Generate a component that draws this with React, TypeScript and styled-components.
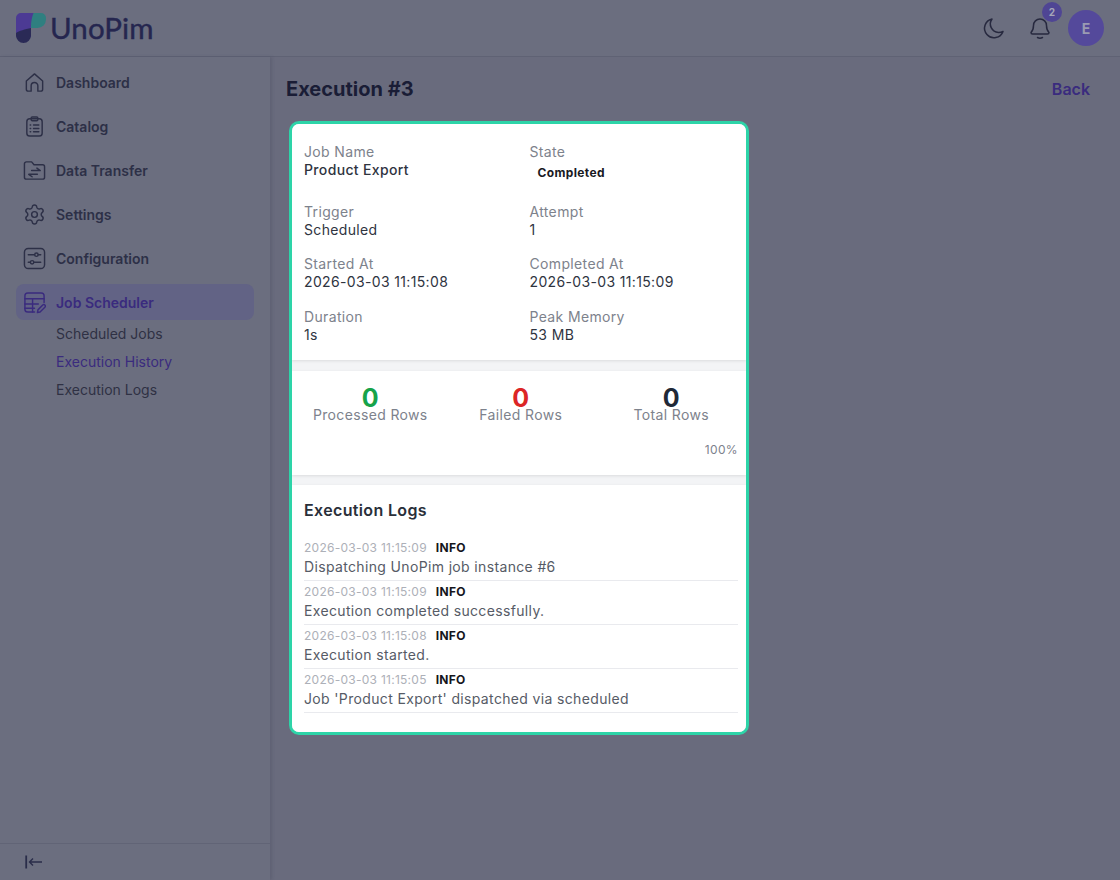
import React from "react";
import styled, { createGlobalStyle } from "styled-components";
import { Settings } from "lucide-react";

const GlobalStyle = createGlobalStyle`
  html, body { margin: 0; padding: 0; height: 100%; }
  body { background: #696b7d; font-family: Inter, "Liberation Sans", sans-serif; overflow: hidden; }
  * { box-sizing: border-box; }
`;

const Page = styled.div`
  width: 1120px;
  height: 880px;
  display: flex;
  flex-direction: column;
  background: #696b7d;
`;

const Header = styled.header`
  height: 57px;
  flex: none;
  display: flex;
  align-items: center;
  justify-content: space-between;
  padding: 0 16px;
  background: #6b6e7f;
  border-bottom: 1px solid #5f6274;
`;

const Brand = styled.div`
  display: flex;
  align-items: center;
  gap: 4px;
  margin-top: -1px;
`;

const Wordmark = styled.span`
  font-family: Lato, sans-serif;
  font-size: 29.5px;
  font-weight: 400;
  line-height: 30px;
  letter-spacing: 0.1px;
  color: #25264f;
  -webkit-text-stroke: 0.4px #25264f;
`;

const HeaderTools = styled.div`
  display: flex;
  align-items: center;
`;

const ToolButton = styled.div`
  position: relative;
  width: 24px;
  height: 24px;
  color: #27293f;
  margin-right: 22px;
`;

const Badge = styled.span`
  position: absolute;
  top: -14px;
  left: 14px;
  width: 20px;
  height: 20px;
  border-radius: 50%;
  background: #4f4594;
  color: #a5a6b8;
  font-size: 10px;
  font-weight: 700;
  display: flex;
  align-items: center;
  justify-content: center;
`;

const Avatar = styled.div`
  width: 36px;
  height: 36px;
  border-radius: 50%;
  background: #54499b;
  color: #9a9ab2;
  font-size: 14px;
  font-weight: 700;
  display: flex;
  align-items: center;
  justify-content: center;
  margin-left: -6px;
`;

const Body = styled.div`
  flex: 1;
  min-height: 0;
  display: flex;
`;

const Sidebar = styled.aside`
  width: 270px;
  flex: none;
  display: flex;
  flex-direction: column;
  justify-content: space-between;
  background: #6b6e7f;
  box-shadow: 2px 0 3px rgba(60, 62, 85, 0.22);
`;

const Nav = styled.nav`
  display: flex;
  flex-direction: column;
  gap: 8px;
  padding: 7px 16px 0;
`;

const NavItem = styled.div<{ $active?: boolean }>`
  height: 36px;
  display: flex;
  align-items: center;
  gap: 10px;
  padding-left: 7px;
  border-radius: 8px;
  font-size: 14px;
  font-weight: 600;
  color: ${(p) => (p.$active ? "#3a2b7e" : "#2d3047")};
  background: ${(p) => (p.$active ? "#626385" : "transparent")};

  svg {
    width: 23px;
    height: 23px;
    flex: none;
  }
`;

const SubNav = styled.div`
  display: flex;
  flex-direction: column;
  gap: 8px;
  padding: 0 0 0 40px;
  margin-top: -4px;
`;

const SubItem = styled.div<{ $active?: boolean }>`
  height: 20px;
  line-height: 20px;
  font-size: 14px;
  color: ${(p) => (p.$active ? "#3a2b7e" : "#2f3144")};
`;

const SidebarFoot = styled.div`
  height: 37px;
  display: flex;
  align-items: center;
  padding-left: 25px;
  border-top: 1px solid #616476;
  color: #2a2d4a;
`;

const Main = styled.main`
  flex: 1;
  padding: 20px 30px 0 16px;
`;

const TitleRow = styled.div`
  display: flex;
  align-items: center;
  justify-content: space-between;
  height: 24px;
`;

const Title = styled.h1`
  margin: 0;
  font-size: 20px;
  font-weight: 700;
  line-height: 24px;
  color: #1a1d36;
`;

const BackLink = styled.a`
  font-size: 16px;
  font-weight: 600;
  color: #3a2b7e;
`;

const Card = styled.section`
  width: 460px;
  height: 614px;
  margin: 20px 0 0 3px;
  display: flex;
  flex-direction: column;
  border: 3px solid #2dd4a8;
  border-radius: 10px;
  background: #f3f4f6;
  overflow: hidden;
  letter-spacing: 0.35px;
`;

const Panel = styled.div`
  background: #fff;
  box-shadow: 0 1px 3px rgba(0, 0, 0, 0.1);
`;

const DetailPanel = styled(Panel)`
  height: 236px;
  padding: 19px 12px 0;
  display: grid;
  grid-template-columns: 225.5px 1fr;
  grid-template-rows: 60px 52px 53px 40px;
`;

const Field = styled.div`
  display: flex;
  flex-direction: column;
`;

const FieldLabel = styled.span`
  font-size: 14px;
  line-height: 18px;
  color: #7d828c;
`;

const FieldValue = styled.span<{ $strong?: boolean }>`
  font-size: 14px;
  line-height: 18px;
  font-weight: ${(p) => (p.$strong ? 500 : 400)};
  color: #2f343f;
`;

const StateBadge = styled.span`
  font-size: 12px;
  font-weight: 700;
  line-height: 18px;
  margin: 3px 0 0 8px;
  color: #1a1a1f;
`;

const StatsPanel = styled(Panel)`
  height: 104px;
  margin-top: 11px;
  padding: 17px 8px 0 3px;
`;

const StatsRow = styled.div`
  display: grid;
  grid-template-columns: repeat(3, 150.5px);
`;

const Stat = styled.div`
  display: flex;
  flex-direction: column;
  align-items: center;
`;

const StatValue = styled.span<{ $color: string }>`
  font-size: 25px;
  font-weight: 700;
  line-height: 20px;
  color: ${(p) => p.$color};
`;

const StatLabel = styled.span`
  font-size: 14px;
  line-height: 14px;
  color: #7d828c;
`;

const Percent = styled.div`
  margin-top: 20px;
  text-align: right;
  font-size: 12px;
  line-height: 16px;
  color: #7d828c;
`;

const LogsPanel = styled(Panel)`
  flex: 1;
  margin-top: 10px;
  padding: 15px 8px 0 12px;
`;

const LogsTitle = styled.h2`
  margin: 0 0 17px;
  font-size: 16px;
  font-weight: 600;
  line-height: 20px;
  color: #2a2f3a;
`;

const LogRow = styled.div`
  height: 44px;
  padding-top: 3px;
  border-bottom: 1px solid #e9eaee;
`;

const LogMeta = styled.div`
  display: flex;
  gap: 9px;
  font-size: 12px;
  line-height: 16px;
  letter-spacing: 0.26px;
  color: #adb0b8;
`;

const LogLevel = styled.span`
  font-weight: 700;
  color: #15151c;
`;

const LogMessage = styled.div`
  font-size: 14px;
  line-height: 22px;
  color: #565b66;
`;

const LogoMark = () => (
  <svg width="30" height="30" viewBox="0 0 30 30">
    <path d="M15 0h10a5 5 0 0 1 5 5v1.500a8.500 8.500 0 0 1-8.500 8.500H15z" fill="#2f7f80" />
    <path d="M0 5a5 5 0 0 1 5-5h12.500C16 4 15 8 15 15v9H0z" fill="#4c3a94" />
    <path d="M0 20C3 17.500 9 16.500 15 15v7.500a7.500 7.500 0 0 1-15 0z" fill="#2a2a56" />
  </svg>
);

const stroke = {
  fill: "none",
  stroke: "currentColor",
  strokeWidth: 1.5,
  strokeLinecap: "round" as const,
  strokeLinejoin: "round" as const,
};

const HomeIcon = () => (
  <svg viewBox="0 0 24 24" {...stroke}>
    <path d="M3.500 10.500 12 3l8.500 7.500V19a2 2 0 0 1-2 2H15.500v-5.500a3.500 3.500 0 0 0-7 0V21H5.500a2 2 0 0 1-2-2z" />
  </svg>
);

const CatalogIcon = () => (
  <svg viewBox="0 0 24 24" {...stroke}>
    <rect x="4" y="4" width="16" height="18" rx="3" />
    <rect x="8.500" y="2" width="7" height="4" rx="1.200" />
    <path d="M11 10.500h5.500M11 14h5.500M11 17.500h5.500M7.500 10.500h.5M7.500 14h.5M7.500 17.500h.5" />
  </svg>
);

const TransferIcon = () => (
  <svg viewBox="0 0 24 24" {...stroke}>
    <path d="M1.500 5a2 2 0 0 1 2-2h5.500l2.500 3h9a2 2 0 0 1 2 2v11a2 2 0 0 1-2 2h-17a2 2 0 0 1-2-2z" />
    <path d="M14.500 9.500 18 12H9M9.500 18.500 6 16h9" />
  </svg>
);

const SlidersIcon = () => (
  <svg viewBox="0 0 24 24" {...stroke}>
    <rect x="1.500" y="1.500" width="21" height="21" rx="4" />
    <circle cx="14" cy="8" r="1.800" />
    <circle cx="9.500" cy="16" r="1.800" />
    <path d="M5.500 8h6.500M16 8h2.500M5.500 16h2M11.500 16h7" />
  </svg>
);

const SchedulerIcon = () => (
  <svg viewBox="0 0 24 24" {...stroke}>
    <path d="M12 22H5a3 3 0 0 1-3-3V5a3 3 0 0 1 3-3h14a3 3 0 0 1 3 3v7" />
    <path d="M2 8h20M2 13.500h14M2 18h10M10 8v14" />
    <path d="M15 22.500l.6-2.800 5-5a1.500 1.500 0 0 1 2.200 2.200l-5 5z" />
  </svg>
);

const MoonIcon = () => (
  <svg viewBox="0 0 24 24" width="24" height="24" {...stroke}>
    <path d="M10 3a9.500 9.500 0 1 0 11 12.500c-1.500.8-3 1-4.500 1A8.500 8.500 0 0 1 10 3z" />
  </svg>
);

const BellIcon = () => (
  <svg viewBox="0 0 24 24" width="24" height="24" {...stroke}>
    <path d="M12 3a6.500 6.500 0 0 0-6.500 6.500c0 4-1 5.500-2.500 7 0 1 .5 1.500 1.500 1.500h15c1 0 1.500-.5 1.500-1.500-1.500-1.500-2.500-3-2.500-7A6.500 6.500 0 0 0 12 3z" />
    <path d="M9.500 21.500c1.500.8 3.500.8 5 0" />
  </svg>
);

const CollapseIcon = () => (
  <svg viewBox="0 0 18 14" width="18" height="14" fill="none" stroke="currentColor" strokeWidth="1.400">
    <path d="M1.200 0.500v13" strokeWidth="1.800" />
    <path d="M17 7H4.500M8 3.500 4.500 7 8 10.500" />
  </svg>
);

const details = [
  { label: "Trigger", value: "Scheduled" },
  { label: "Attempt", value: "1" },
  { label: "Started At", value: "2026-03-03 11:15:08" },
  { label: "Completed At", value: "2026-03-03 11:15:09" },
  { label: "Duration", value: "1s" },
  { label: "Peak Memory", value: "53 MB" },
];

const stats = [
  { label: "Processed Rows", color: "#16a34a" },
  { label: "Failed Rows", color: "#dc2626" },
  { label: "Total Rows", color: "#1f2937" },
];

const logs = [
  { time: "2026-03-03 11:15:09", message: "Dispatching UnoPim job instance #6" },
  { time: "2026-03-03 11:15:09", message: "Execution completed successfully." },
  { time: "2026-03-03 11:15:08", message: "Execution started." },
  { time: "2026-03-03 11:15:05", message: "Job 'Product Export' dispatched via scheduled" },
];

export default function App() {
  return (
    <Page>
      <GlobalStyle />
      <Header>
        <Brand>
          <LogoMark />
          <Wordmark>UnoPim</Wordmark>
        </Brand>
        <HeaderTools>
          <ToolButton>
            <MoonIcon />
          </ToolButton>
          <ToolButton>
            <BellIcon />
            <Badge>2</Badge>
          </ToolButton>
          <Avatar>E</Avatar>
        </HeaderTools>
      </Header>
      <Body>
        <Sidebar>
          <Nav>
            <NavItem><HomeIcon />Dashboard</NavItem>
            <NavItem><CatalogIcon />Catalog</NavItem>
            <NavItem><TransferIcon />Data Transfer</NavItem>
            <NavItem><Settings strokeWidth={1.5} />Settings</NavItem>
            <NavItem><SlidersIcon />Configuration</NavItem>
            <NavItem $active><SchedulerIcon />Job Scheduler</NavItem>
            <SubNav>
              <SubItem>Scheduled Jobs</SubItem>
              <SubItem $active>Execution History</SubItem>
              <SubItem>Execution Logs</SubItem>
            </SubNav>
          </Nav>
          <SidebarFoot>
            <CollapseIcon />
          </SidebarFoot>
        </Sidebar>
        <Main>
          <TitleRow>
            <Title>Execution #3</Title>
            <BackLink>Back</BackLink>
          </TitleRow>
          <Card>
            <DetailPanel>
              <Field>
                <FieldLabel>Job Name</FieldLabel>
                <FieldValue $strong>Product Export</FieldValue>
              </Field>
              <Field>
                <FieldLabel>State</FieldLabel>
                <StateBadge>Completed</StateBadge>
              </Field>
              {details.map((d) => (
                <Field key={d.label}>
                  <FieldLabel>{d.label}</FieldLabel>
                  <FieldValue>{d.value}</FieldValue>
                </Field>
              ))}
            </DetailPanel>
            <StatsPanel>
              <StatsRow>
                {stats.map((s) => (
                  <Stat key={s.label}>
                    <StatValue $color={s.color}>0</StatValue>
                    <StatLabel>{s.label}</StatLabel>
                  </Stat>
                ))}
              </StatsRow>
              <Percent>100%</Percent>
            </StatsPanel>
            <LogsPanel>
              <LogsTitle>Execution Logs</LogsTitle>
              {logs.map((l) => (
                <LogRow key={l.message}>
                  <LogMeta>
                    <span>{l.time}</span>
                    <LogLevel>INFO</LogLevel>
                  </LogMeta>
                  <LogMessage>{l.message}</LogMessage>
                </LogRow>
              ))}
            </LogsPanel>
          </Card>
        </Main>
      </Body>
    </Page>
  );
}
